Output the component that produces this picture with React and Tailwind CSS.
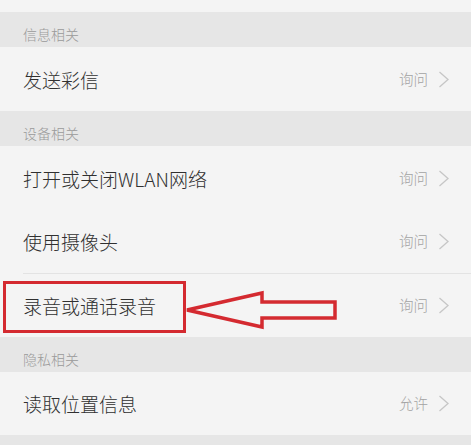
import React from "react";

const font = { fontFamily: '"Noto Sans CJK SC", "Noto Sans", sans-serif' };

function Header({ children }) {
  return (
    <div className="h-[35px] pt-[9px] flex items-center pl-[23px] bg-[#e6e6e6] text-[14px] text-[#9a9a9a] leading-none font-light">
      {children}
    </div>
  );
}

function Chevron() {
  return (
    <svg width="12" height="17" viewBox="0 0 12 17" className="ml-[10px]">
      <polyline points="1.5,1 10,8.5 1.5,16" fill="none" stroke="#c6c6c6" strokeWidth="1.3" />
    </svg>
  );
}

function Row({ title, value, h = "h-[64px]" }) {
  return (
    <div className={`${h} flex items-center justify-between pl-[23px] pr-[21px] bg-[#f4f4f4]`}>
      <span className="text-[19px] text-[#303030] leading-none font-light">{title}</span>
      <span className="flex items-center text-[14.5px] text-[#a3a3a3] leading-none font-light">
        {value}
        <Chevron />
      </span>
    </div>
  );
}

export default function App() {
  return (
    <div className="relative w-[471px] h-[445px] overflow-hidden bg-[#e6e6e6]" style={font}>
      <div className="h-[12px] bg-[#f4f4f4]" />
      <Header>信息相关</Header>
      <Row title="发送彩信" value="询问" />
      <Header>设备相关</Header>
      <Row title="打开或关闭WLAN网络" value="询问" />
      <Row title="使用摄像头" value="询问" h="h-[63px]" />
      <div className="h-px bg-[#f4f4f4] pl-[23px]">
        <div className="h-px bg-[#e3e3e3]" />
      </div>
      <Row title="录音或通话录音" value="询问" h="h-[63px]" />
      <Header>隐私相关</Header>
      <Row title="读取位置信息" value="允许" h="h-[63px]" />

      <div className="absolute left-[3px] top-[281px] w-[183px] h-[52px] border-[3px] border-[#d42a30]" />
      <svg className="absolute left-0 top-0" width="471" height="445" viewBox="0 0 471 445">
        <polygon
          points="187,310 262,293 262,302 335,302 335,318 262,318 262,327"
          fill="none"
          stroke="#d42a30"
          strokeWidth="3.5"
          strokeLinejoin="miter"
        />
      </svg>
    </div>
  );
}
